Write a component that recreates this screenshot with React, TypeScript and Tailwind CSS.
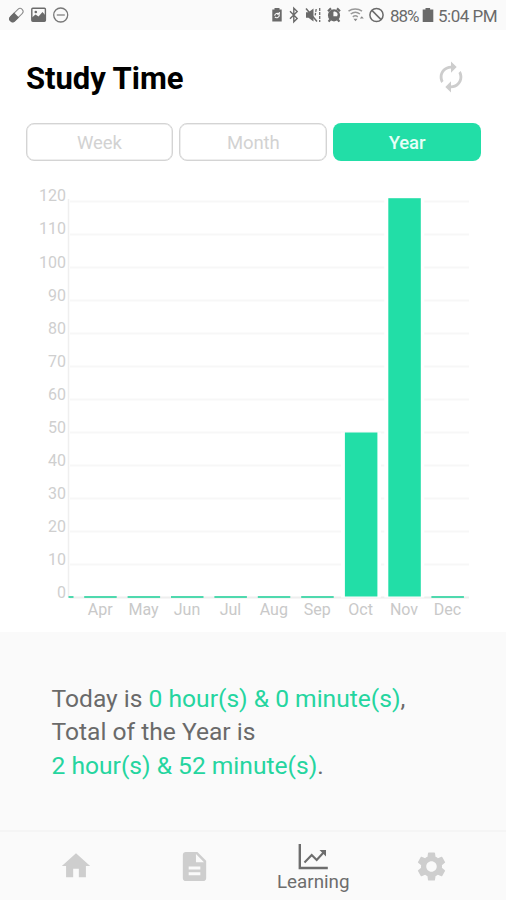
import { MdAutorenew, MdDescription, MdHome, MdSettings } from "react-icons/md";

const tabs = ["Week", "Month", "Year"];

const months = [
  { label: "Apr", value: 0 },
  { label: "May", value: 0 },
  { label: "Jun", value: 0 },
  { label: "Jul", value: 0 },
  { label: "Aug", value: 0 },
  { label: "Sep", value: 0 },
  { label: "Oct", value: 50 },
  { label: "Nov", value: 121 },
  { label: "Dec", value: 0 }
];

const ticks = [0, 10, 20, 30, 40, 50, 60, 70, 80, 90, 100, 110, 120];

// chart geometry, in px
const BASE = 412.5;
const STEP = 33;
const FIRST = 100.5;
const PITCH = 43.4;

function StatusBar() {
  return (
    <header className="flex h-[30px] items-center justify-between bg-[#fafafa] text-[#6a6a6a]">
      <svg width="80" height="30" viewBox="0 0 80 30" fill="none" stroke="currentColor">
        <g transform="rotate(-45 16.5 15)">
          <rect x="8.5" y="12" width="16" height="6" rx="3" strokeWidth="1" stroke="#8a8a8a" />
          <path d="M16.5 11.5H11a3.5 3.5 0 0 0 0 7h5.5z" fill="currentColor" stroke="none" />
        </g>
        <rect x="31.8" y="8.3" width="13.6" height="13" rx="1" strokeWidth="1.4" />
        <path d="M32 21v-3.5l3.5-3 3 2 4-4.5 3 3.5V21z" fill="currentColor" stroke="none" />
        <circle cx="35.8" cy="12" r="1.3" fill="currentColor" stroke="none" />
        <circle cx="60.7" cy="15" r="7" strokeWidth="1.3" stroke="#777" />
        <path d="M56.8 15h8" strokeWidth="1.6" stroke="#999" />
      </svg>
      <div className="flex items-center pr-[9px]">
        <svg width="120" height="30" viewBox="269 0 120 30" fill="none" stroke="currentColor">
          <path d="M274.5 9.5v-1.5h5v1.5h2.2v12h-9.4v-12z" fill="currentColor" stroke="none" />
          <path d="M274.7 15.8a2.5 2.5 0 0 1 4.4-1.7M279.3 15a2.5 2.5 0 0 1-4.4 1.8M279.3 12v2.3h-2.2" stroke="#fafafa" strokeWidth="1.1" />
          <path d="M290 11.2l7.2 7.2-3.4 3.4V8.2l3.4 3.4-7.2 7.2" strokeWidth="1.4" />
          <path d="M306 12.2h2.5l5-3.8v13.2l-5-3.8H306z" fill="currentColor" stroke="none" />
          <path d="M306 8.5l11 13" strokeWidth="1.5" />
          <path d="M316.2 9l-1 6.3M319.7 8v14" strokeWidth="1.3" strokeDasharray="3 1" />
          <circle cx="334" cy="15.3" r="4.9" strokeWidth="2.4" />
          <path d="M334 15.3V10.5a4.8 4.8 0 0 0 0 9.6 4.8 4.8 0 0 0 4.8-4.8z" fill="currentColor" stroke="none" />
          <path d="M328 11.2l3-2.8M340 11.2l-3-2.8M330.3 19.5l-1.7 2.2M337.7 19.5l1.7 2.2" strokeWidth="2.2" />
          <path d="M334 11.8v3.8h3.2" stroke="#fafafa" strokeWidth="1.2" />
          <path d="M348.5 11.2c4-3 9.5-3 13.5 0M350.7 14c2.9-2.2 6.5-2.2 9.2 0M352.8 16.8c1.5-1.1 3.6-1.1 5 0" stroke="#999" strokeWidth="1.5" />
          <path d="M353.5 18.8h4l-2 2.4zM361.8 16.3l2 2.2h-4z" fill="#888" stroke="none" />
          <circle cx="376.5" cy="15" r="6.6" strokeWidth="1.5" />
          <path d="M371.9 10.4l9.2 9.2" strokeWidth="1.5" />
        </svg>
        <span className="ml-[1px] w-[30px] whitespace-nowrap pt-[2px] text-[17px] leading-[30px] tracking-[-1px]">88%</span>
        <svg width="16" height="30" viewBox="0 0 16 30" fill="currentColor">
          <path d="M5.5 9.4V8h4.6v1.4h3.2V22H2.7V9.4z" />
        </svg>
        <span className="ml-[2px] w-[59px] whitespace-nowrap pt-[2px] text-[17px] leading-[30px] tracking-[-0.5px]">5:04 PM</span>
      </div>
    </header>
  );
}

function YearChart() {
  return (
    <svg width="506" height="446.5" viewBox="0 0 506 446.5" className="block text-[16px]">
      {ticks.map((tick, i) => (
        <g key={tick}>
          <path d={`M70 ${BASE - i * STEP}H469`} stroke={i === 0 ? "#eeeeee" : "#f7f7f7"} strokeWidth="2" />
          <text x="66" y={BASE + 0.5 - i * 33.05} textAnchor="end" fill="#cfcfcf">{tick}</text>
        </g>
      ))}
      <path d={`M68.5 14V${BASE}`} stroke="#efefef" strokeWidth="1.5" />
      <rect x="68.5" y={BASE - 1.5} width="5" height="2" fill="#4fd9ae" />
      {months.map((month, i) => {
        const x = FIRST + i * PITCH;
        const height = month.value * 3.3;
        return (
          <g key={month.label}>
            {month.value > 0 ? (
              <>
                <rect x={x - 20} y={BASE - height} width="40" height={height} fill="#fff" />
                <rect x={x - 16} y={BASE - height} width="32.5" height={height - 1} fill="#22dea7" />
              </>
            ) : (
              <rect x={x - 16.3} y={BASE - 1.5} width="32.5" height="2" fill="#4fd9ae" />
            )}
            <text x={x - 0.3} y="430" textAnchor="middle" fill="#c9c9c9">{month.label}</text>
          </g>
        );
      })}
    </svg>
  );
}

function BottomNav() {
  return (
    <nav className="flex h-[70px] border-t-2 border-[#f5f5f5] bg-[#fafafa] pl-[17px] pr-[15px] text-[#cecece]">
      <button className="flex flex-1 items-center justify-center"><MdHome size={34} /></button>
      <button className="flex flex-1 items-center justify-center"><MdDescription size={35} /></button>
      <button className="flex flex-1 flex-col items-center pt-[12px] text-[#6d6d6d]">
        <svg width="31" height="26" viewBox="0 0 31 26" fill="none" stroke="currentColor">
          <path d="M1.8 0v24h28" strokeWidth="2.4" />
          <path d="M6.5 18.5l7.2-7.5 5 5L26 8" strokeWidth="2.1" />
          <path d="M21.5 6H28v6.5z" fill="currentColor" stroke="none" />
        </svg>
        <span className="text-[18.8px] leading-[24px]">Learning</span>
      </button>
      <button className="flex flex-1 items-center justify-center"><MdSettings size={35} /></button>
    </nav>
  );
}

export default function App() {
  return (
    <div className="flex h-[900px] w-[506px] flex-col overflow-hidden bg-white font-[Roboto,sans-serif]">
      <StatusBar />
      <div className="flex h-[93px] items-center justify-between pl-[26px] pr-[38px]">
        <h1 className="pt-[5px] text-[31px] font-bold tracking-[-0.05px] text-black">Study Time</h1>
        <MdAutorenew size={34} className="text-[#cdcdcd]" />
      </div>
      <div className="grid h-[38px] grid-cols-3 gap-[6px] pl-[25.5px] pr-[25px]">
        {tabs.map((tab) => (
          <button
            key={tab}
            className={`rounded-lg text-[18.5px] ${
              tab === "Year"
                ? "bg-[#22dea7] pt-[3px] font-medium tracking-[-0.1px] text-[#e6fff7]"
                : "border-[1.5px] border-[#d4d4d4] pt-[3px] tracking-[-0.1px] text-[#d2d2d2] shadow-[inset_0_0_0_0.5px_#dddddd]"
            }`}
          >
            {tab}
          </button>
        ))}
      </div>
      <div className="pt-[24px]">
        <YearChart />
      </div>
      <section className="flex-1 bg-[#fafafa] pl-[51.5px] pt-[50.5px] text-[24.6px] leading-[33.3px] text-[#6a6a6a]">
        <p>Today is <span className="text-[#25d59f]">0 hour(s) &amp; 0 minute(s)</span>,</p>
        <p>Total of the Year is</p>
        <p><span className="text-[#25d59f]">2 hour(s) &amp; 52 minute(s)</span>.</p>
      </section>
      <BottomNav />
    </div>
  );
}
